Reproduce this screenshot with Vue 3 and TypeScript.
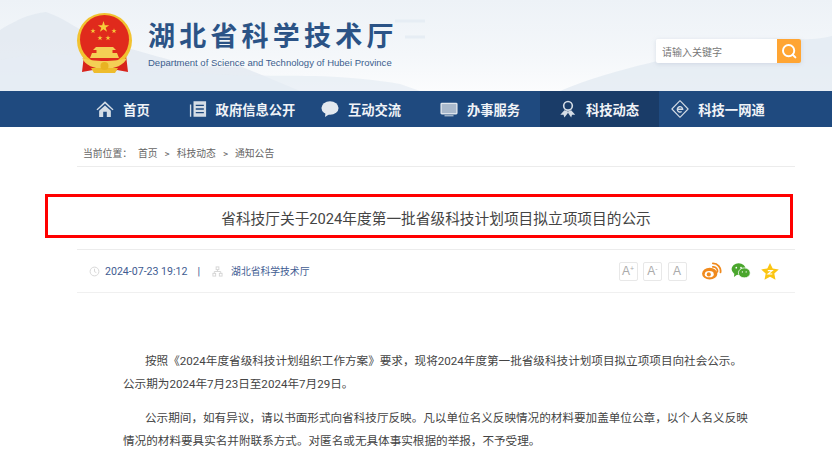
<template>
  <div class="page">
    <header class="header">
      <svg class="header-bg" viewBox="0 0 832 91" preserveAspectRatio="none" aria-hidden="true">
        <path d="M0 30 C20 18 30 14 46 12 C70 20 90 40 120 46 C160 56 190 70 240 66 L300 91 L0 91Z" fill="#dfe7f0" opacity=".7" />
        <path d="M0 60 C60 46 120 60 190 72 C260 80 320 70 400 84 L420 91 L0 91Z" fill="#e6ecf3" opacity=".7" />
        <path d="M560 91 C620 66 680 58 730 42 C770 34 800 44 832 36 L832 91Z" fill="#e2e9f2" opacity=".75" />
        <path d="M395 21 H425 M405 37 H425" stroke="#e6edf4" stroke-width="3" />
      </svg>
      <div class="brand">
        <svg class="emblem" viewBox="0 0 58 62" aria-hidden="true">
          <path d="M8 42 L6 59 L17 57 L22 60 H36 L41 57 L52 59 L50 42Z" fill="#d8231b" />
          <circle cx="28.500" cy="27.500" r="27.500" fill="#f2c230" />
          <circle cx="28.500" cy="26.500" r="24.500" fill="#e02a1c" />
          <path
            v-for="star in stars"
            :key="star.x + '-' + star.y"
            d="M0-1L.225-.31H.95L.36.12.59.81 0 .38-.59.81-.36.12-.95-.31H-.225Z"
            fill="#f6cd3a"
            :transform="`translate(${star.x} ${star.y}) scale(${star.s})`"
          />
          <path d="M20 34h17l3 3h-3.500v3H41l2 5H14l2-5h4.500v-3H17z" fill="#f4cf55" />
          <path d="M6 45c4 2 14 3 22.500 3S47 47 51 45c-3 7-12 11-22.500 11S9 52 6 45z" fill="#f4cf55" />
          <path d="M15 55h27l-3 5H18z" fill="#eebc2c" />
          <circle cx="28.500" cy="53" r="4" fill="#e8b322" />
        </svg>
        <div class="brand-text">
          <h1 class="brand-name">湖北省科学技术厅</h1>
          <p class="brand-en">Department of Science and Technology of Hubei Province</p>
        </div>
      </div>
      <div class="search">
        <input class="search-input" type="text" placeholder="请输入关键字" />
        <button class="search-btn" type="button" aria-label="搜索">
          <svg viewBox="0 0 24 24" fill="none" stroke="#fff" stroke-width="2.600" stroke-linecap="round">
            <circle cx="11.500" cy="11.500" r="7.500" />
            <path d="M17 17l3.500 3.500" />
          </svg>
        </button>
      </div>
    </header>

    <nav class="nav">
      <a v-for="item in navItems" :key="item.label" class="nav-item" :class="{ active: item.active }">
        <svg class="nav-icon" viewBox="0 0 20 20" v-html="item.icon"></svg>
        <span>{{ item.label }}</span>
      </a>
    </nav>

    <main class="main">
      <div class="crumbs">
        <span class="crumb-label">当前位置：</span>
        <span>首页</span>
        <span class="crumb-sep">&gt;</span>
        <span>科技动态</span>
        <span class="crumb-sep">&gt;</span>
        <span>通知公告</span>
      </div>

      <div class="title-row">
        <h2 class="title">省科技厅关于2024年度第一批省级科技计划项目拟立项项目的公示</h2>
        <div class="red-box"></div>
      </div>

      <div class="meta">
        <svg class="meta-icon" viewBox="0 0 12 12" fill="none" stroke="#d4d4d4" stroke-width="1">
          <circle cx="6" cy="6" r="4.800" />
          <path d="M6 3v3.200l2 1" />
        </svg>
        <span class="meta-date">2024-07-23 19:12</span>
        <span class="meta-bar">|</span>
        <svg class="meta-icon org" viewBox="0 0 12 12" fill="none" stroke="#d4d4d4" stroke-width="1">
          <rect x="4.500" y="1" width="3" height="3" />
          <rect x="1" y="8" width="3" height="3" />
          <rect x="8" y="8" width="3" height="3" />
          <path d="M6 4v2M2.500 8V6h7v2" />
        </svg>
        <span class="meta-src">湖北省科学技术厅</span>
        <div class="tools">
          <span class="font-btn">A<sup>+</sup></span>
          <span class="font-btn">A<sup>-</sup></span>
          <span class="font-btn">A</span>
          <svg class="share weibo" viewBox="0 0 22 20" aria-hidden="true">
            <ellipse cx="9" cy="13" rx="8.500" ry="6.500" fill="#f08a1d" />
            <ellipse cx="8.500" cy="13.500" rx="5" ry="3.500" fill="#fff" />
            <circle cx="8" cy="13.800" r="2.300" fill="#f08a1d" />
            <path d="M12.500 5.500a4.500 4.500 0 0 1 5 5.500M12.500 1.500a8.500 8.500 0 0 1 8.500 10" fill="none" stroke="#f08a1d" stroke-width="2" stroke-linecap="round" />
          </svg>
          <svg class="share wechat" viewBox="0 0 20 17" aria-hidden="true">
            <ellipse cx="7.500" cy="6.500" rx="7.500" ry="6.300" fill="#4aa62d" />
            <path d="M3 10.500L2.500 15l4-3z" fill="#4aa62d" />
            <ellipse cx="13.500" cy="10.500" rx="6.300" ry="5.300" fill="#4aa62d" stroke="#fff" stroke-width=".8" />
            <circle cx="5" cy="5" r=".9" fill="#fff" />
            <circle cx="10" cy="5" r=".9" fill="#fff" />
            <circle cx="11.500" cy="9.500" r=".7" fill="#fff" />
            <circle cx="15.500" cy="9.500" r=".7" fill="#fff" />
          </svg>
          <svg class="share qzone" viewBox="0 0 18 17" aria-hidden="true">
            <path d="M9 0l2.700 5.600 6.100.8-4.500 4.200 1.200 6.100L9 13.800l-5.500 2.900 1.200-6.100L.2 6.400l6.100-.8z" fill="#fbc512" />
            <path d="M6.800 7.600h4.400L7 11h4.300" fill="none" stroke="#fff" stroke-width="1.100" />
          </svg>
        </div>
      </div>

      <article class="content">
        <p>按照《2024年度省级科技计划组织工作方案》要求，现将2024年度第一批省级科技计划项目拟立项项目向社会公示。公示期为2024年7月23日至2024年7月29日。</p>
        <p>公示期间，如有异议，请以书面形式向省科技厅反映。凡以单位名义反映情况的材料要加盖单位公章，以个人名义反映情况的材料要具实名并附联系方式。对匿名或无具体事实根据的举报，不予受理。</p>
      </article>
    </main>
  </div>
</template>

<script setup lang="ts">
interface NavItem {
  label: string
  icon: string
  active?: boolean
}

const stars = [
  { x: 27.500, y: 14, s: 6 },
  { x: 17, y: 18, s: 2.800 },
  { x: 38, y: 18, s: 2.800 },
  { x: 24, y: 25, s: 2.800 },
  { x: 32, y: 25, s: 2.800 },
]

const c = '#d5dde6'

const navItems: NavItem[] = [
  {
    label: '首页',
    icon: `<path d="M10 1.500L.5 10.500l1.200 1L10 4l8.300 7.500 1.200-1z" fill="${c}"/><path d="M3.500 12L10 6l6.500 6v7h-4.500v-6H8v6H3.500z" fill="${c}"/>`,
  },
  {
    label: '政府信息公开',
    icon: `<path d="M1 5h1.500v13.500H1zM5 1.500h14v17H5z" fill="${c}"/><path d="M7.500 6h9M7.500 10h9M7.500 14h9" stroke="#1f4a7f" stroke-width="1.600"/>`,
  },
  {
    label: '互动交流',
    icon: `<ellipse cx="10" cy="9" rx="9.500" ry="7.500" fill="#e3e9ef"/><path d="M5 14l-.5 5 5-3.500z" fill="#e3e9ef"/>`,
  },
  {
    label: '办事服务',
    icon: `<rect x=".5" y="3" width="19" height="13" rx="1.500" fill="#dfe5ec"/><rect x="2" y="4.500" width="16" height="10" fill="#a9b9cc"/><path d="M5 17.500h10" stroke="#a9b9cc" stroke-width="1.500"/>`,
  },
  {
    label: '科技动态',
    active: true,
    icon: `<circle cx="10" cy="6.500" r="4.800" fill="none" stroke="${c}" stroke-width="1.800"/><path d="M6 11.500l-4.500 5 3.500-.2 1 3.200L9.500 15 10 14l.5 1 3 4.500 1-3.200 3.500.2-4.500-5-3.500 1.300z" fill="${c}"/>`,
  },
  {
    label: '科技一网通',
    icon: `<path d="M10 .8l9 9.200-9 9.200L1 10z" fill="none" stroke="${c}" stroke-width="1.200" stroke-linejoin="round"/><path d="M7 10.300h6a3 3 0 1 0-1.200 2.500" fill="none" stroke="${c}" stroke-width="1.500"/>`,
  },
]
</script>

<style>
html,
body {
  margin: 0;
  background: #fff;
}
</style>

<style scoped>
.page {
  width: 832px;
  height: 456px;
  overflow: hidden;
  font-family: Roboto, "Noto Sans CJK SC", sans-serif;
  color: #333;
}

.header {
  position: relative;
  height: 91px;
  display: flex;
  justify-content: space-between;
  align-items: flex-start;
  padding: 0 0 0 76px;
  background: linear-gradient(180deg, #edf2f7 0%, #f4f7fa 60%, #fbfcfd 100%);
  overflow: hidden;
}

.header-bg {
  position: absolute;
  inset: 0;
  width: 100%;
  height: 100%;
}

.brand {
  position: relative;
  display: flex;
  gap: 14px;
  padding-top: 13px;
}

.emblem {
  width: 58px;
  height: 62px;
  flex: none;
}

.brand-text {
  display: flex;
  flex-direction: column;
}

.brand-name {
  margin: 2px 0 0;
  font-family: "Noto Sans CJK SC", sans-serif;
  font-size: 27px;
  line-height: 40px;
  font-weight: 700;
  letter-spacing: 4.200px;
  color: #2b5386;
  white-space: nowrap;
}

.brand-en {
  margin: 2px 0 0;
  font-family: "Liberation Sans", sans-serif;
  font-size: 9.530px;
  line-height: 12px;
  color: #3c5e8e;
  white-space: nowrap;
}

.search {
  position: relative;
  display: flex;
  margin: 39px 31px 0 0;
  box-shadow: 0 1px 4px rgba(160, 175, 195, .35);
  border-radius: 2px;
}

.search-input {
  width: 121px;
  height: 24px;
  box-sizing: border-box;
  border: 0;
  outline: 0;
  padding: 0 6px;
  background: #fff;
  font: 10px "Noto Sans CJK SC", sans-serif;
  border-radius: 2px 0 0 2px;
}

.search-input::placeholder {
  color: #777;
}

.search-btn {
  width: 24px;
  height: 24px;
  border: 0;
  padding: 3px;
  background: #ffa533;
  border-radius: 0 2px 2px 0;
}

.search-btn svg {
  display: block;
  width: 18px;
  height: 18px;
}

.nav {
  height: 36px;
  display: flex;
  padding-left: 64px;
  background: #1f4a7f;
}

.nav-item {
  width: 119px;
  box-sizing: border-box;
  padding-right: 1px;
  display: flex;
  align-items: center;
  justify-content: center;
  gap: 9px;
  font-size: 13.300px;
  font-weight: 700;
  color: #f0f3f7;
}

.nav-item.active {
  background: #1a3c68;
}

.nav-icon {
  width: 18px;
  height: 18px;
  flex: none;
}

.main {
  width: 718px;
  margin-left: 77px;
}

.crumbs {
  height: 40px;
  box-sizing: border-box;
  padding: 13px 0 0 6px;
  display: flex;
  align-items: center;
  border-bottom: 1px solid #ececec;
  font-size: 9.800px;
  color: #666;
}

.crumb-label {
  margin-right: 6px;
}

.crumb-sep {
  margin: 0 7px;
}

.title-row {
  position: relative;
  height: 83px;
  box-sizing: border-box;
  padding-top: 19px;
  display: flex;
  align-items: center;
  justify-content: center;
  border-bottom: 1px solid #ececec;
}

.title {
  margin: 0;
  font-size: 14.700px;
  font-weight: 400;
  color: #444;
}

.red-box {
  position: absolute;
  left: -32px;
  top: 27px;
  width: 748px;
  height: 44px;
  box-sizing: border-box;
  border: 3.500px solid #f00;
}

.meta {
  height: 43px;
  box-sizing: border-box;
  display: flex;
  align-items: center;
  padding-left: 12px;
  border-bottom: 1px solid #f0f0f0;
  font-size: 10.600px;
  color: #3f5c92;
}

.meta-icon {
  width: 11px;
  height: 11px;
  flex: none;
}

.meta-date {
  margin-left: 5px;
}

.meta-bar {
  margin: 0 12px 0 10px;
}

.meta-icon.org {
  margin-right: 8px;
}

.meta-src {
  font-size: 9.800px;
}

.tools {
  margin-left: auto;
  display: flex;
  align-items: center;
  margin-right: 16px;
}

.font-btn {
  width: 19px;
  height: 19px;
  box-sizing: border-box;
  margin-right: 5.500px;
  border: 1px solid #e8e8e8;
  border-radius: 2px;
  display: flex;
  align-items: center;
  justify-content: center;
  font-family: "Liberation Sans", sans-serif;
  font-size: 12px;
  color: #aaa;
}

.font-btn sup {
  font-size: 7px;
  line-height: 1;
  margin-top: -5px;
}

.share {
  flex: none;
}

.weibo {
  width: 21px;
  height: 18px;
  margin-left: 9px;
}

.wechat {
  width: 20px;
  height: 16px;
  margin-left: 9px;
}

.qzone {
  width: 18px;
  height: 17px;
  margin-left: 10px;
}

.content {
  padding: 57px 45px 0 46px;
  font-size: 11.600px;
  line-height: 23px;
  color: #444;
}

.content p {
  margin: 0 0 11px;
  text-indent: 22px;
}
</style>
